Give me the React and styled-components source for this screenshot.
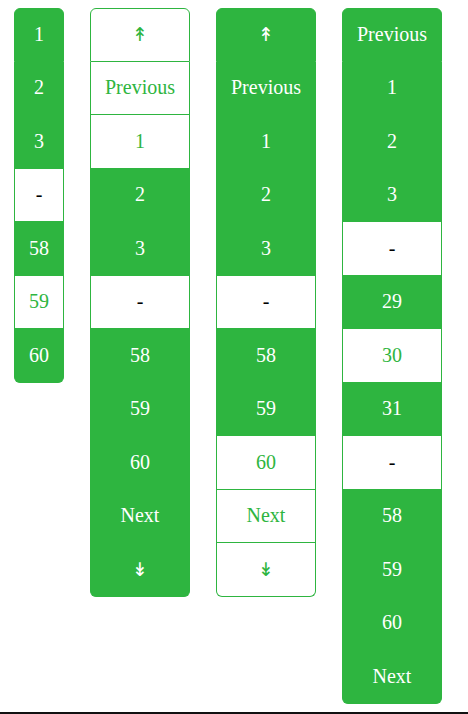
import React from 'react';
import styled, { createGlobalStyle } from 'styled-components';

const GREEN = '#2eb540';

const GlobalStyle = createGlobalStyle`
  body {
    margin: 0;
    background: #fff;
    font-family: 'Liberation Serif', serif;
  }
`;

const Page = styled.div`
  box-sizing: border-box;
  min-height: 100vh;
  padding: 8px 14px;
  display: flex;
  align-items: flex-start;
  gap: 26px;
  border-bottom: 2px solid #111;
`;

const List = styled.ul`
  list-style: none;
  margin: 0;
  padding: 0;
  display: flex;
  flex-direction: column;
`;

const Item = styled.li`
  box-sizing: border-box;
  height: 53.5px;
  padding: 0 14px;
  display: flex;
  align-items: center;
  justify-content: center;
  font-family: 'Liberation Serif', serif;
  font-size: 20px;
  border: 1px solid ${GREEN};
  border-top-width: 0;
  background: ${(p) => (p.$on ? GREEN : '#fff')};
  color: ${(p) => (p.$on ? '#fff' : p.$gap ? '#000' : GREEN)};

  &:first-child {
    border-top-width: 1px;
    border-radius: 6px 6px 0 0;
  }
  &:last-child {
    border-radius: 0 0 6px 6px;
  }
`;

const Arrow = styled.span`
  font-family: 'DejaVu Sans', sans-serif;
  font-size: 19px;
  line-height: 1;
`;

const UP = <Arrow>↟</Arrow>;
const DOWN = <Arrow>↡</Arrow>;

// [label, green?]
const columns = [
  [['1', 1], ['2', 1], ['3', 1], ['-', 0], ['58', 1], ['59', 0], ['60', 1]],
  [[UP, 0], ['Previous', 0], ['1', 0], ['2', 1], ['3', 1], ['-', 0], ['58', 1], ['59', 1], ['60', 1], ['Next', 1], [DOWN, 1]],
  [[UP, 1], ['Previous', 1], ['1', 1], ['2', 1], ['3', 1], ['-', 0], ['58', 1], ['59', 1], ['60', 0], ['Next', 0], [DOWN, 0]],
  [['Previous', 1], ['1', 1], ['2', 1], ['3', 1], ['-', 0], ['29', 1], ['30', 0], ['31', 1], ['-', 0], ['58', 1], ['59', 1], ['60', 1], ['Next', 1]],
];

const App = () => (
  <>
    <GlobalStyle />
    <Page>
      {columns.map((col, i) => (
        <List key={i}>
          {col.map(([label, on], j) => (
            <Item key={j} $on={!!on} $gap={label === '-'}>
              {label}
            </Item>
          ))}
        </List>
      ))}
    </Page>
  </>
);

export default App;
